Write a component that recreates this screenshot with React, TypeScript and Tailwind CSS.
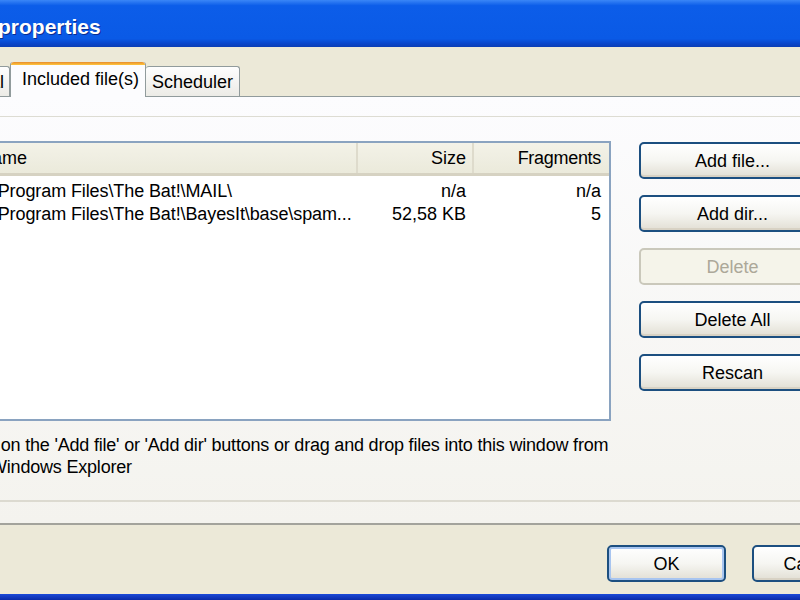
import React from 'react';

type Row = { name: string; size: string; frags: string };

const rows: Row[] = [
  { name: 'C:\\Program Files\\The Bat!\\MAIL\\', size: 'n/a', frags: 'n/a' },
  { name: 'C:\\Program Files\\The Bat!\\BayesIt\\base\\spam...', size: '52,58 KB', frags: '5' },
];

function XpButton({ label, disabled, isDefault, className = '' }: { label: string; disabled?: boolean; isDefault?: boolean; className?: string }) {
  if (disabled) {
    return (
      <div className={`flex h-[37px] items-center justify-center rounded-[5px] border-2 border-[#cac8bb] bg-[#f5f4ea] text-[#aca899] ${className}`}>
        {label}
      </div>
    );
  }
  return (
    <div
      className={`flex h-[37px] items-center justify-center rounded-[5px] border-2 border-[#1c4f80] bg-gradient-to-b from-white via-[#f6f6f2] to-[#e2dfd4] text-black ${
        isDefault ? 'shadow-[inset_0_0_0_2px_#a8c5f0]' : 'shadow-[inset_0_-2px_0_#d8d2c4]'
      } ${className}`}
    >
      {label}
    </div>
  );
}

export default function App() {
  return (
    <div className="flex h-[600px] w-[800px] flex-col overflow-hidden bg-[#ece9d8] font-['Liberation_Sans',Arial,sans-serif] text-[18px] leading-none text-black">
      {/* title bar */}
      <div className="flex h-[47px] shrink-0 items-center bg-[linear-gradient(to_bottom,#3a86f7_0%,#0c5de9_12%,#0a5ae6_82%,#0a47cc_92%,#0b3db5_100%)]">
        <span className="ml-[-2px] mt-[6px] text-[21px] font-bold text-white [text-shadow:1px_1px_0_#0b2c90]">properties</span>
      </div>

      {/* tabs */}
      <div className="flex h-[49px] shrink-0 items-end">
        <div className="flex h-[30px] w-[80px] ml-[-70px] shrink-0 items-center justify-end rounded-t-[3px] border border-b-0 border-[#919b9c] bg-gradient-to-b from-[#fefefe] to-[#ecebe6] pr-[5px]">
          General
        </div>
        <div className="relative z-10 -mb-px flex h-[35px] w-[136px] shrink-0 flex-col rounded-t-[3px] border-x border-[#919b9c] bg-[#fcfcfe]">
          <div className="h-[3px] rounded-t-[3px] bg-gradient-to-b from-[#e68b2c] to-[#ffc73c]" />
          <div className="flex flex-1 items-center pl-[11px] pb-[5px]">Included file(s)</div>
        </div>
        <div className="flex h-[30px] w-[94px] shrink-0 items-center justify-center rounded-t-[3px] border border-b-0 border-l-0 border-[#919b9c] bg-gradient-to-b from-[#fefefe] to-[#ecebe6]">
          Scheduler
        </div>
      </div>

      {/* tab panel */}
      <div className="flex h-[429px] shrink-0 flex-col border-t border-b-2 border-t-[#919b9c] border-b-[#a3a39c] bg-gradient-to-b from-[#fcfcfe] to-[#f4f3ee]">
        <div className="mt-[19px] h-px bg-[#dddcd3]" />

        <div className="mt-[24px] flex">
          {/* list view */}
          <div className="ml-[-33px] h-[280px] w-[644px] shrink-0 border-2 border-[#8aa3c0] bg-white">
            <div className="flex h-[33px] items-stretch border-b-[3px] border-[#d6d2c2] bg-gradient-to-b from-[#f3f2e8] to-[#ebeadb]">
              <div className="flex w-[389px] items-center border-r-2 border-[#dedbcc] pl-[10px]">Name</div>
              <div className="flex w-[116px] items-center justify-end border-r-2 border-[#dedbcc] pr-[6px]">Size</div>
              <div className="flex flex-1 items-center justify-end pr-[8px] tracking-[-0.3px]">Fragments</div>
            </div>
            <div className="pt-[3px]">
              {rows.map((r) => (
                <div key={r.name} className="flex h-[23px] items-center">
                  <div className="w-[389px] whitespace-nowrap pl-[6px] tracking-[-0.1px]">{r.name}</div>
                  <div className="w-[116px] pr-[8px] text-right">{r.size}</div>
                  <div className="flex-1 pr-[8px] text-right">{r.frags}</div>
                </div>
              ))}
            </div>
          </div>

          {/* buttons */}
          <div className="ml-[28px] mt-[1px] flex shrink-0 flex-col gap-[16px]">
            <XpButton label="Add file..." className="w-[187px]" />
            <XpButton label="Add dir..." className="w-[187px]" />
            <XpButton label="Delete" disabled className="w-[187px]" />
            <XpButton label="Delete All" className="w-[187px]" />
            <XpButton label="Rescan" className="w-[187px]" />
          </div>
        </div>

        <div className="mt-[13px] whitespace-nowrap leading-[22px] tracking-[-0.2px]">
          <div className="ml-[-42px]">Click on the 'Add file' or 'Add dir' buttons or drag and drop files into this window from</div>
          <div className="ml-[-10px]">Windows Explorer</div>
        </div>

        <div className="mt-[22px] h-[2px] bg-[#dcdad0]" />
      </div>

      {/* bottom buttons */}
      <div className="flex flex-1 items-start pl-[607px] pt-[20px]">
        <XpButton label="OK" isDefault className="w-[119px] shrink-0" />
        <XpButton label="Cancel" className="ml-[26px] w-[119px] shrink-0" />
      </div>

      <div className="h-[6px] shrink-0 bg-gradient-to-b from-[#1b4ad8] to-[#0a2aa8]" />
    </div>
  );
}
